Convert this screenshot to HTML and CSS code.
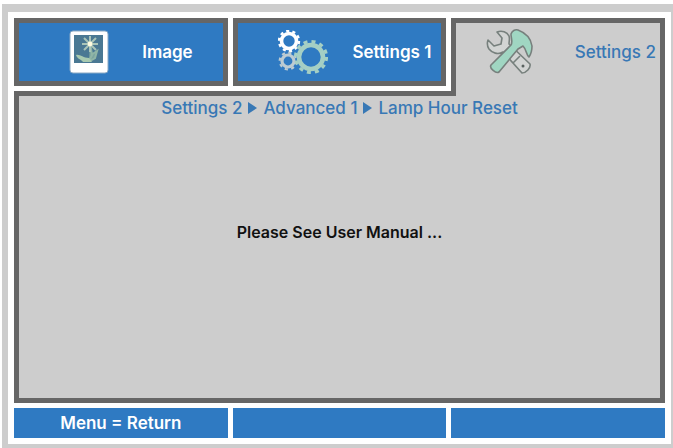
FILE: index.html
```
<!DOCTYPE html>
<html lang="en">
<head>
  <meta charset="UTF-8">
  <meta name="viewport" content="width=device-width, initial-scale=1.0">
  <title>Lamp Hour Reset</title>
  <link rel="stylesheet" href="styles.css">
</head>
<body>
  <div class="frame">
    <div class="menu">
      <nav class="tabs">
        <button type="button" class="tab tab-image">
          <svg width="40" height="44" viewBox="0 0 40 44" aria-hidden="true">
            <rect x="1" y="1" width="38" height="42" rx="3" fill="#fff" stroke="#8aa9c4" stroke-width="1"/>
            <rect x="5" y="5" width="29" height="28" fill="#4a7893"/>
            <path d="M21 12 23 25 20 31M22 25l6-4-2 7-5 3" fill="#7ba5a0" stroke="#8fb5a6" stroke-width="2"/>
            <path d="M7 25c4-1 7 3 13 3l3 4H14c-2-3-6-3-7-7z" fill="#a7c9b0"/>
            <path d="M21 6v16M13 14h16M15 8l12 12M27 8 15 20" stroke="#a9c4b8" stroke-width="2"/>
            <circle cx="21" cy="14" r="2.4" fill="#fffbe0"/>
          </svg>
          <span>Image</span>
        </button>
        <button type="button" class="tab tab-settings1">
          <svg width="50" height="44" viewBox="0 0 50 44" aria-hidden="true">
            <g fill="none" stroke="#fff">
              <circle cx="11" cy="11" r="7.5" stroke-width="3.6"/>
              <circle cx="11" cy="11" r="10" stroke-width="2.4" stroke-dasharray="3.1 3.18"/>
            </g>
            <g fill="none" stroke="#bccbd2">
              <circle cx="10" cy="31" r="6" stroke-width="3.2"/>
              <circle cx="10" cy="31" r="8.3" stroke-width="2.2" stroke-dasharray="3.2 3.32"/>
            </g>
            <g fill="none" stroke="#a5cfc4">
              <circle cx="33" cy="27" r="12" stroke-width="4.6"/>
              <circle cx="33" cy="27" r="15.5" stroke-width="3.2" stroke-dasharray="4 4.12"/>
            </g>
          </svg>
          <span>Settings 1</span>
        </button>
        <button type="button" class="tab tab-settings2 active" aria-current="page">
          <svg width="48" height="48" viewBox="0 0 48 48" aria-hidden="true">
            <g stroke="#77807d" stroke-width="1.6" stroke-linejoin="round">
              <path d="M11 4c5-2 10 0 12 4 1 3 0 5 0 8l21 20c1 4-4 9-8 9L17 24c-5 3-11 1-14-3-2-3-2-6-1-9l6 6 7-2 1-6z" fill="#d2d4d3"/>
              <path d="M34 28l-7 7" fill="none"/>
              <path d="M25 6c1-3 4-5 7-4 8 3 13 9 14 16 0 4-1 8-3 11-3-2-2-7-6-11l-5 3L13 44c-3 2-10-4-8-7l20-20c2-3 0-7 0-11z" fill="#a0d6c2"/>
            </g>
            <circle cx="37" cy="38" r="1.5" fill="#59615f"/>
          </svg>
          <span>Settings 2</span>
        </button>
      </nav>

      <main class="panel">
        <div class="breadcrumb">
          <span>Settings 2</span>
          <i class="arrow"></i>
          <span>Advanced 1</span>
          <i class="arrow"></i>
          <span>Lamp Hour Reset</span>
        </div>
        <p class="message">Please See User Manual ...</p>
      </main>

      <footer class="footer">
        <div class="cell">Menu = Return</div>
        <div class="cell"></div>
        <div class="cell"></div>
      </footer>
    </div>
  </div>
</body>
</html>
```

FILE: styles.css
```
* {
  box-sizing: border-box;
}
body {
  font-family: Inter, "Liberation Sans", sans-serif;
  font-size: 17px;
  font-weight: 500;
  line-height: 20px;
  margin: 0;
  padding: 4px 0 0 2px;
  background-color: #fff;
  height: 100vh;
}
.frame {
  height: 100%;
  padding: 8px 2px 4px 6px;
  background: #cdcdcd;
}
.menu {
  display: flex;
  flex-direction: column;
  gap: 5px;
  height: 100%;
  padding: 6px;
  background: #fff;
}
.tabs,
.footer {
  display: grid;
  grid-template-columns: repeat(3, 1fr);
  gap: 5px;
}
.tab {
  display: flex;
  align-items: center;
  justify-content: space-between;
  height: 68px;
  border: 5px solid #666;
  background: #2f7ac2;
  color: #fff;
  font: inherit;
  font-weight: 600;
  cursor: pointer;
}
.tab-image {
  padding: 0 30px 0 50px;
}
.tab-settings1 {
  padding: 0 10px 0 40px;
}
.tab-settings2 {
  padding: 0 4px 0 30px;
}
/* runs over the gap and the panel's top border */
.tab.active {
  position: relative;
  height: 78px;
  margin-bottom: -10px;
  padding-bottom: 15px;
  border-bottom: 0;
  background: #cdcdcd;
  color: #3878b5;
  font-weight: 500;
}
.panel {
  flex: 1;
  padding-top: 2px;
  border: 5px solid #666;
  background: #cdcdcd;
}
.breadcrumb {
  display: flex;
  align-items: center;
  justify-content: center;
  gap: 6px;
  color: #3878b5;
}
.arrow {
  border-left: 9px solid #3878b5;
  border-top: 6px solid transparent;
  border-bottom: 6px solid transparent;
}
.message {
  margin: 104px 0 0;
  text-align: center;
  color: #111;
  font-size: 16px;
  font-weight: 600;
}
.footer {
  min-height: 30px;
}
.cell {
  display: flex;
  align-items: center;
  justify-content: center;
  background: #2f7ac2;
  color: #fff;
  font-weight: 600;
}
```
